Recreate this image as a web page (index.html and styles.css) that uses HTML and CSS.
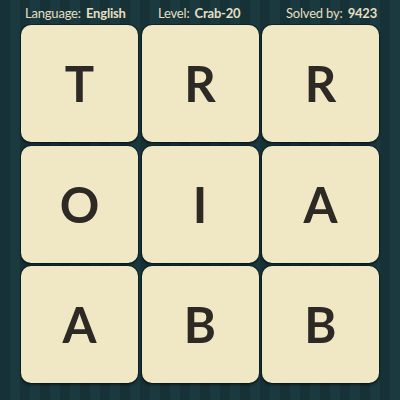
FILE: index.html
```
<!DOCTYPE html>
<html>
<head>
<meta charset="utf-8">
<link rel="stylesheet" href="styles.css">
</head>
<body>
<div class="page">
  <div class="header">
    <span class="info">Language: <b>English</b></span>
    <span class="info">Level: <b>Crab-20</b></span>
    <span class="info last">Solved by: <b>9423</b></span>
  </div>
  <div class="board">
    <div class="tile">T</div>
    <div class="tile">R</div>
    <div class="tile">R</div>
    <div class="tile">O</div>
    <div class="tile">I</div>
    <div class="tile">A</div>
    <div class="tile">A</div>
    <div class="tile">B</div>
    <div class="tile">B</div>
  </div>
</div>
</body>
</html>
```
FILE: styles.css
```
html, body {
  margin: 0;
  padding: 0;
}
body {
  width: 400px;
  height: 400px;
  overflow: hidden;
  background-color: #17353a;
  background-image: repeating-linear-gradient(90deg, #163237 0px, #163237 10px, #1a3a40 10px, #1a3a40 20px);
  font-family: Lato, "Open Sans", sans-serif;
}
.page {
  display: flex;
  flex-direction: column;
  width: 400px;
  height: 400px;
}
.header {
  height: 24px;
  padding-top: 1px;
  display: grid;
  grid-template-columns: 133px 128px 1fr;
  align-items: center;
  padding-left: 25px;
  padding-right: 26px;
  color: #e6dfc0;
  font-size: 13px;
  letter-spacing: -0.2px;
  line-height: 1;
}
.info {
  white-space: nowrap;
}
.info.last {
  text-align: left;
}
.info b {
  font-weight: 700;
  margin-left: 2px;
}
.board {
  display: grid;
  grid-template-columns: repeat(3, 117px);
  grid-auto-rows: 117px;
  gap: 3.5px;
  padding-left: 21px;
}
.tile {
  background: #f0e8c4;
  border-radius: 10px;
  box-shadow: 0 0 0 1px rgba(8, 24, 27, 0.55), 0 2px 3px rgba(0, 0, 0, 0.45);
  display: flex;
  align-items: center;
  justify-content: center;
  color: #2d2924;
  font-size: 49px;
  font-weight: 700;
  line-height: 1;
}
```
